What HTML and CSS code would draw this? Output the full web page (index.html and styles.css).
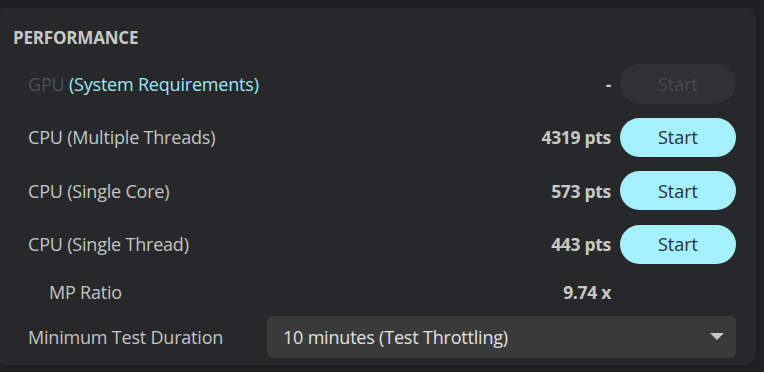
FILE: index.html
```html
<!DOCTYPE html>
<html>
<head>
<meta charset="utf-8">
<link rel="stylesheet" href="styles.css">
</head>
<body>
<section class="panel">
  <h2 class="title">PERFORMANCE</h2>
  <div class="rows">
    <div class="row">
      <span class="label"><span class="muted">GPU</span> <span class="link">(System Requirements)</span></span>
      <span class="score">-</span>
      <button class="btn disabled">Start</button>
    </div>
    <div class="row">
      <span class="label">CPU (Multiple Threads)</span>
      <span class="score">4319 pts</span>
      <button class="btn">Start</button>
    </div>
    <div class="row">
      <span class="label">CPU (Single Core)</span>
      <span class="score">573 pts</span>
      <button class="btn">Start</button>
    </div>
    <div class="row">
      <span class="label">CPU (Single Thread)</span>
      <span class="score">443 pts</span>
      <button class="btn">Start</button>
    </div>
    <div class="row ratio">
      <span class="label indent">MP Ratio</span>
      <span class="score">9.74 x</span>
      <span class="spacer"></span>
    </div>
    <div class="row duration">
      <span class="label">Minimum Test Duration</span>
      <div class="select">
        <span>10 minutes (Test Throttling)</span>
        <svg class="caret" width="14" height="8" viewBox="0 0 14 8"><path d="M0 0H14L7 7Z" fill="#c8c8c8"/></svg>
      </div>
    </div>
  </div>
</section>
</body>
</html>
```
FILE: styles.css
```css
html, body {
  margin: 0;
  padding: 0;
  background: #1e2022;
  width: 764px;
  height: 372px;
  overflow: hidden;
}
body {
  font-family: "Open Sans", "Noto Sans", sans-serif;
  color: #c4c4c4;
}
.panel {
  margin: 8px 8px 0 -4px;
  height: 357px;
  box-sizing: border-box;
  background: #26282a;
  border-radius: 12px;
  padding: 18px 20px 0 17px;
}
.title {
  margin: 0;
  font-size: 17px;
  font-weight: 700;
  color: #c9c9c9;
  line-height: 24px;
  letter-spacing: -0.2px;
}
.rows {
  display: flex;
  flex-direction: column;
  margin-top: 7px;
}
.row {
  display: flex;
  align-items: center;
  height: 53.5px;
  padding-left: 15px;
}
.label {
  flex: 1;
  font-size: 18px;
  letter-spacing: -0.2px;
}
.indent { padding-left: 21px; }
.muted { color: #4e5052; }
.link { color: #9fe6f6; }
.score {
  font-weight: 700;
  font-size: 17.5px;
  letter-spacing: -0.3px;
  margin-right: 9px;
  color: #c8c8c8;
}
.btn {
  width: 116px;
  height: 39px;
  border: none;
  border-radius: 20px;
  background: #a4f0fd;
  color: #263236;
  font-family: inherit;
  font-size: 18px;
  letter-spacing: 0;
  padding: 0;
}
.btn.disabled {
  background: #2f3132;
  color: #4b4d4f;
}
.spacer { width: 116px; }
.ratio { height: 42px; }
.duration { height: 48px; }
.duration .label { flex: 0 0 239px; }
.select {
  flex: 1;
  height: 42px;
  background: #3a3a3a;
  border-radius: 6px;
  display: flex;
  align-items: center;
  justify-content: space-between;
  padding: 0 12px 0 16px;
  font-size: 18px;
  letter-spacing: -0.2px;
  color: #e2e2e2;
}
```
